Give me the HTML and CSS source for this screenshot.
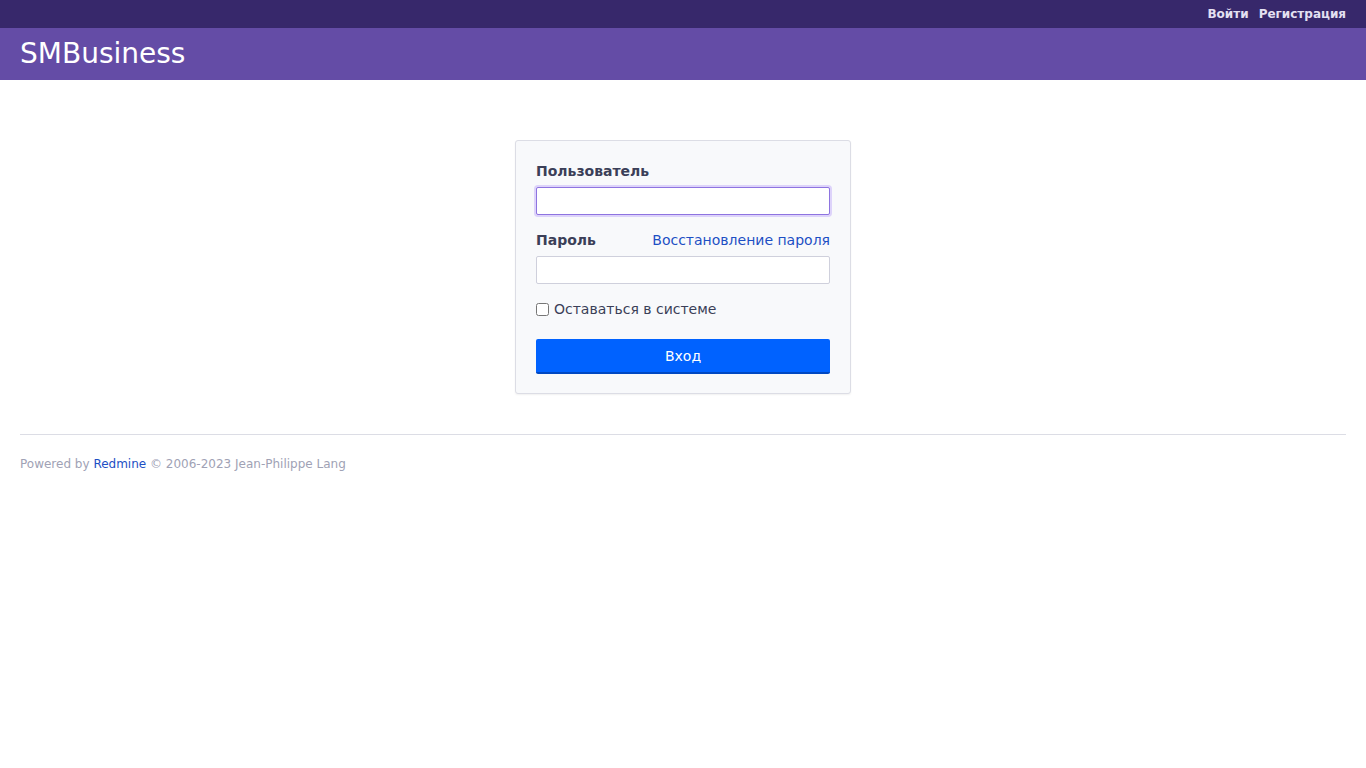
FILE: index.html
```html
<!DOCTYPE html>
<html lang="ru">

<head>
    <meta charset="UTF-8">
    <meta name="viewport" content="width=device-width, initial-scale=1.0">
    <title>SMBusiness</title>
    <link rel="stylesheet" href="styles.css">
</head>

<body>
    <div class="top-menu">
        <a href="#">Войти</a>
        <a href="#">Регистрация</a>
    </div>
    <div class="header">
        <h1>SMBusiness</h1>
    </div>
    <div class="main">
        <form class="login-form">
            <label class="field-label" for="username">Пользователь</label>
            <input type="text" id="username" class="text-input focused">
            <div class="label-row">
                <label class="field-label" for="password">Пароль</label>
                <a href="#" class="lost-password">Восстановление пароля</a>
            </div>
            <input type="password" id="password" class="text-input">
            <label class="autologin">
                <input type="checkbox"> Оставаться в системе
            </label>
            <button type="button" class="login-submit">Вход</button>
        </form>
    </div>
    <div class="footer">
        Powered by <a href="#">Redmine</a> &copy; 2006-2023 Jean-Philippe Lang
    </div>
</body>

</html>
```
FILE: styles.css
```css
body {
    font-family: "DejaVu Sans", Verdana, sans-serif;
    margin: 0;
    background: #fff;
    color: #3b3f58;
}

a {
    text-decoration: none;
}

.top-menu {
    height: 28px;
    background: #37286b;
    display: flex;
    justify-content: flex-end;
    align-items: center;
    gap: 10px;
    padding: 0 20px;
}

.top-menu a {
    color: #e4e0f2;
    font-size: 12px;
    font-weight: bold;
}

.header {
    height: 52px;
    background: #644ca6;
    display: flex;
    align-items: center;
    padding: 0 20px;
}

.header h1 {
    margin: 0 0 1px;
    color: #fff;
    font-size: 28px;
    font-weight: normal;
}

.main {
    display: flex;
    justify-content: center;
    padding: 60px 0 40px;
}

.login-form {
    width: 294px;
    padding: 20px 20px 19px;
    background: #f8f9fb;
    border: 1px solid #dcdde5;
    border-radius: 3px;
    box-shadow: 0 1px 2px rgba(0, 0, 0, 0.06);
    display: flex;
    flex-direction: column;
}

.field-label {
    font-size: 14px;
    font-weight: bold;
    line-height: 20px;
    margin-bottom: 6px;
    margin-top: 0;
}

.label-row {
    display: flex;
    justify-content: space-between;
    align-items: baseline;
    margin-top: 15px;
}

.lost-password {
    color: #1d4fc4;
    font-size: 14px;
    line-height: 20px;
}

.text-input {
    box-sizing: border-box;
    width: 294px;
    height: 28px;
    border: 1px solid #cfd0dc;
    border-radius: 2px;
    background: #fff;
    margin: 0;
}

.text-input.focused {
    border-color: #8e74e0;
    box-shadow: 0 0 0 2px #ddd3fa;
}

.autologin {
    display: flex;
    align-items: center;
    gap: 5px;
    font-size: 14px;
    margin-top: 16px;
    line-height: 18px;
}

.autologin input {
    margin: 0;
    width: 13px;
    height: 13px;
}

.login-submit {
    margin-top: 21px;
    height: 35px;
    border: none;
    border-bottom: 2px solid #0048c2;
    border-radius: 2px;
    background: #0062ff;
    color: #fff;
    font-family: inherit;
    font-size: 14px;
}

.footer {
    margin: 0 20px;
    border-top: 1px solid #dcdde5;
    padding-top: 22px;
    font-size: 12px;
    color: #a0a2b5;
}

.footer a {
    color: #1d4fc4;
}
```
